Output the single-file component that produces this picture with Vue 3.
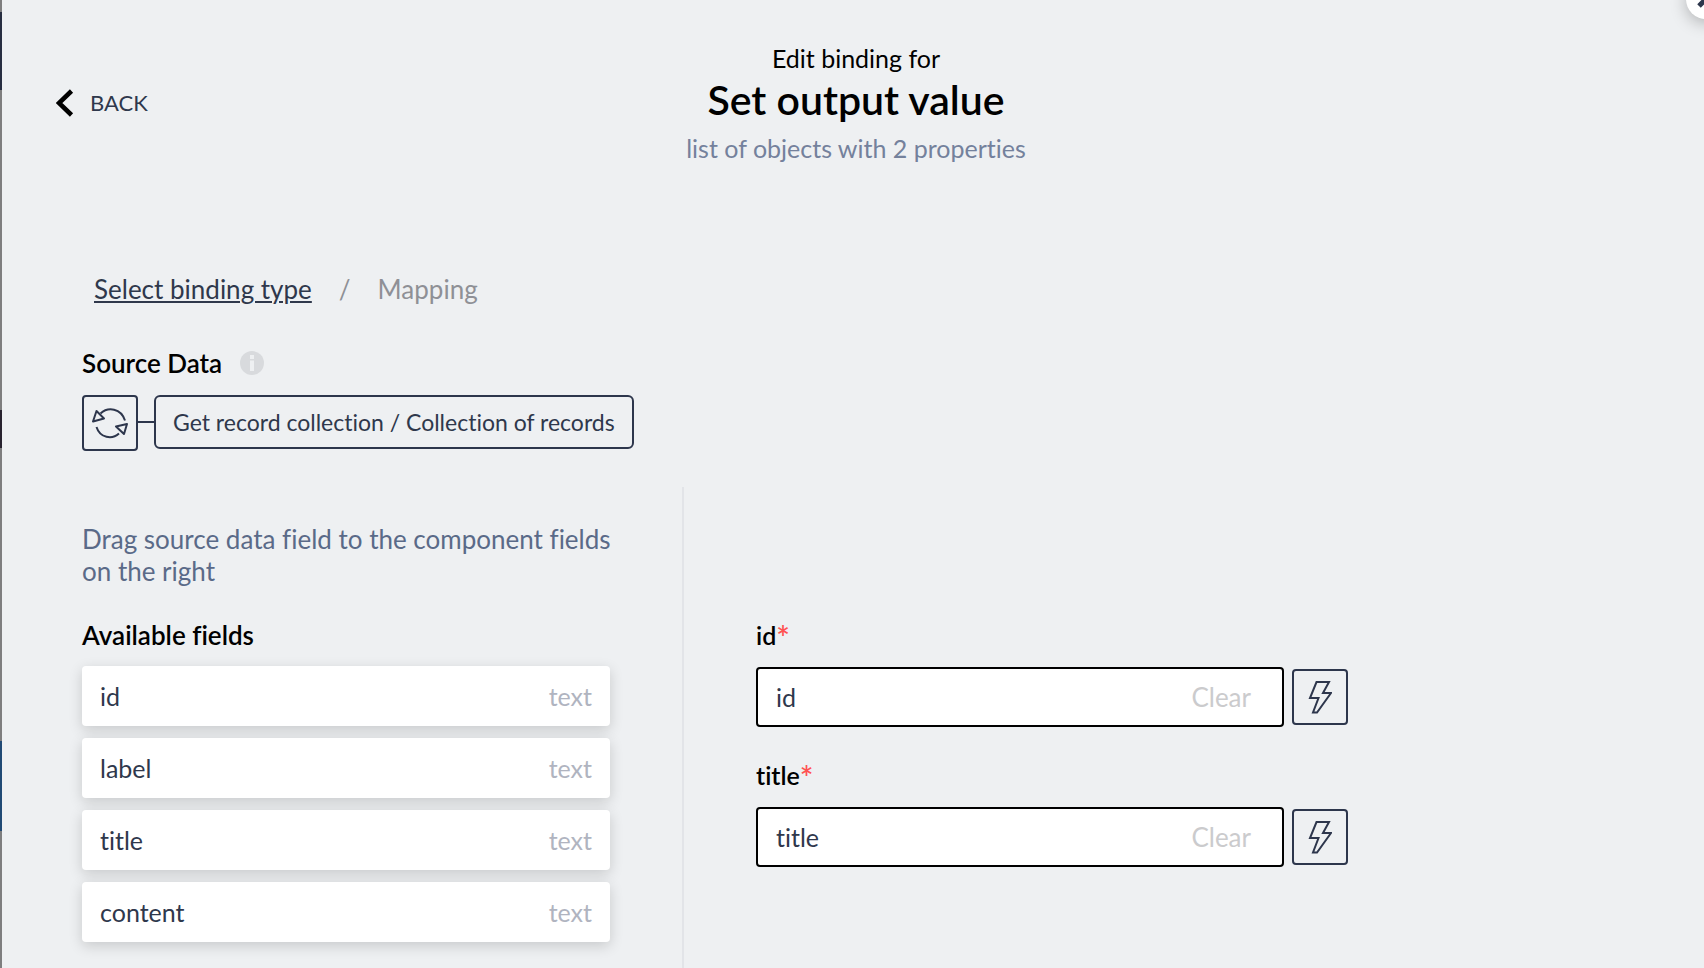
<script setup>
import { ref } from 'vue'

const available = ref([
  { name: 'id', type: 'text' },
  { name: 'label', type: 'text' },
  { name: 'title', type: 'text' },
  { name: 'content', type: 'text' },
])

const targets = ref([
  { name: 'id', value: 'id' },
  { name: 'title', value: 'title' },
])
</script>

<template>
  <div class="page">
    <div class="backdrop" aria-hidden="true">
      <span class="block top"></span>
      <span class="block navy"></span>
      <span class="block upper"></span>
      <span class="block dark"></span>
      <span class="block lower"></span>
      <span class="block blue"></span>
      <span class="block rest"></span>
    </div>

    <main class="panel">
      <button class="close" type="button" aria-label="Close">
        <svg width="40" height="40" viewBox="0 0 40 40">
          <path d="M13 13 27 27M27 13 13 27" fill="none" stroke="#2d364c" stroke-width="5" />
        </svg>
      </button>

      <header class="header">
        <button class="back" type="button">
          <svg width="18" height="28" viewBox="0 0 18 28">
            <path d="M15.500 2 3 14l12.500 12" fill="none" stroke="#000" stroke-width="4.600" />
          </svg>
          <span>BACK</span>
        </button>
        <div class="heading">
          <p class="kicker">Edit binding for</p>
          <h1>Set output value</h1>
          <p class="schema">list of objects with 2 properties</p>
        </div>
      </header>

      <nav class="crumbs" aria-label="Breadcrumb">
        <a href="#">Select binding type</a>
        <span>/</span>
        <span>Mapping</span>
      </nav>

      <section class="source">
        <h2>
          Source Data
          <svg class="info" width="24" height="24" viewBox="0 0 24 24">
            <circle cx="12" cy="12" r="12" fill="#d8dadd" />
            <path d="M10 4h4v4h-4zM10 9.500h4V20h-4z" fill="#eef0f2" />
          </svg>
        </h2>
        <div class="chain">
          <button class="square" type="button" aria-label="Change source type">
            <svg width="36" height="32" viewBox="0 0 36 32" fill="none" stroke="#2d364c" stroke-width="2">
              <path d="M8.500 6.500C16 -.500 29 1 33 13.500" />
              <path d="M4.500 20C8 31 20 33 27 26.500" />
              <path d="M4.500 4 1 14.500 12 11.500z" stroke-linejoin="round" />
              <path d="M24 19.500 35 17 32 27z" stroke-linejoin="round" />
            </svg>
          </button>
          <span class="link-line"></span>
          <button class="record" type="button">Get record collection / Collection of records</button>
        </div>
      </section>

      <section class="mapping">
        <div class="fields">
          <p class="hint">Drag source data field to the component fields on the right</p>
          <h2>Available fields</h2>
          <ul>
            <li v-for="field in available" :key="field.name" draggable="true">
              <span>{{ field.name }}</span>
              <span class="type">{{ field.type }}</span>
            </li>
          </ul>
        </div>

        <div class="divider"></div>

        <form class="targets" @submit.prevent>
          <div v-for="target in targets" :key="target.name" class="target">
            <label :for="'target-' + target.name">{{ target.name }}<span class="required">*</span></label>
            <div class="row">
              <div class="box">
                <input :id="'target-' + target.name" v-model="target.value" type="text" />
                <button class="clear" type="button" @click="target.value = ''">Clear</button>
              </div>
              <button class="square" type="button" aria-label="Edit binding">
                <svg width="24" height="34" viewBox="0 0 24 34" fill="none" stroke="#2d364c" stroke-width="2">
                  <path d="M8.500 2H21L15 13H23L9 32.500H5L10.500 18H2z" />
                </svg>
              </button>
            </div>
          </div>
        </form>
      </section>
    </main>
  </div>
</template>

<style>
body {
  margin: 0;
}
</style>

<style scoped>
.page {
  display: flex;
  min-height: 100vh;
  overflow: hidden;
  font-family: Lato, "Liberation Sans", sans-serif;
  font-size: 25px;
  font-variant-ligatures: none;
  line-height: 32px;
  color: #2f384c;
  background: #eef0f2;
}

.page * {
  box-sizing: border-box;
}

h1,
h2,
p,
ul {
  margin: 0;
  padding: 0;
}

button {
  padding: 0;
  border: 0;
  background: none;
  color: inherit;
  font: inherit;
  font-variant-ligatures: none;
  cursor: pointer;
}

svg {
  display: block;
  flex: none;
}

.backdrop {
  display: flex;
  flex: none;
  flex-direction: column;
  width: 2px;
}

.block { background: #7e7e7f; }
.top { height: 12px; }
.navy { height: 78px; background: #272e41; }
.upper { height: 320px; }
.dark { height: 38px; background: #28232f; }
.lower { height: 293px; }
.blue { height: 90px; background: #214a75; }
.rest { flex: 1; }

.panel {
  position: relative;
  display: flex;
  flex: 1;
  flex-direction: column;
  min-width: 0;
}

.close {
  position: absolute;
  top: -21px;
  right: -22px;
  border-radius: 50%;
  background: #fff;
  box-shadow: 0 4px 16px rgba(0, 0, 0, 0.25);
}

.header {
  display: grid;
  grid-template-columns: 1fr auto 1fr;
  align-items: center;
  padding: 42px 48px 0 54px;
}

.back {
  display: flex;
  align-items: center;
  justify-self: start;
  gap: 16px;
  font-size: 22px;
}

.heading {
  text-align: center;
}

.kicker {
  color: #000;
}

h1 {
  margin: 2px 0 8px;
  font-size: 41px;
  line-height: 48px;
  font-weight: 600;
  color: #000;
}

.schema {
  color: #74819c;
}

.crumbs {
  display: flex;
  gap: 27px;
  padding: 109px 92px 0;
  font-size: 26px;
  color: #8f9096;
}

.crumbs a {
  color: #2f384c;
  text-decoration-thickness: 2px;
  text-underline-offset: 2px;
}

.source {
  padding: 42px 80px 0;
}

h2 {
  display: flex;
  align-items: center;
  gap: 18px;
  font-size: 26px;
  font-weight: 600;
  color: #000;
}

.chain {
  display: flex;
  margin-top: 16px;
}

.square {
  display: flex;
  flex: none;
  align-items: center;
  justify-content: center;
  width: 56px;
  height: 56px;
  border: 2px solid #2d364c;
  border-radius: 4px;
}

.link-line {
  width: 16px;
  height: 2px;
  margin-top: 26px;
  background: #2d364c;
}

.record {
  height: 54px;
  padding: 0 17px;
  border: 2px solid #2d364c;
  border-radius: 6px;
  font-size: 23px;
}

.mapping {
  display: grid;
  flex: 1;
  grid-template-columns: minmax(0, 528px) 2px minmax(0, 592px);
  gap: 72px;
  padding: 36px 80px 0;
}

.fields {
  padding: 36px 0 26px;
}

.hint {
  margin: 0 -24px 32px 0;
  font-size: 26px;
  color: #5a6a88;
}

.fields ul {
  display: flex;
  flex-direction: column;
  gap: 12px;
  margin-top: 15px;
  list-style: none;
}

.fields li {
  display: flex;
  align-items: center;
  justify-content: space-between;
  height: 60px;
  padding: 0 18px;
  border-radius: 4px;
  background: #fff;
  box-shadow: 0 4px 14px rgba(0, 0, 0, 0.16);
}

.type {
  color: #b0b4c0;
}

.divider {
  background: #e2e4e8;
}

.targets {
  padding-top: 132px;
}

.target {
  margin-bottom: 32px;
}

.target label {
  display: block;
  margin-bottom: 16px;
  font-weight: 600;
  color: #000;
}

.required {
  font-size: 32px;
  line-height: 24px;
  vertical-align: -5px;
  color: #ff5252;
}

.row {
  display: flex;
  align-items: center;
  gap: 8px;
}

.box {
  display: flex;
  flex: 1;
  align-items: center;
  min-width: 0;
  height: 60px;
  padding: 0 31px 0 18px;
  border: 2px solid #000;
  border-radius: 4px;
  background: #fff;
}

.box input {
  flex: 1;
  min-width: 0;
  padding: 0;
  border: 0;
  outline: 0;
  background: none;
  color: inherit;
  font: inherit;
  font-variant-ligatures: none;
}

.clear {
  font-size: 26px;
  color: #cbcbcd;
}
</style>
